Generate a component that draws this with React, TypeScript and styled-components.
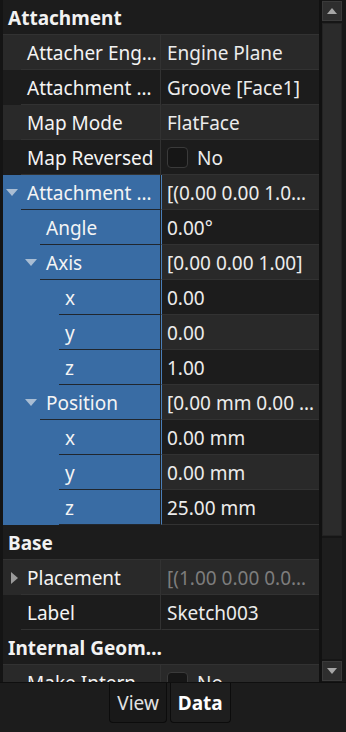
import React from 'react';
import styled, { createGlobalStyle } from 'styled-components';

const Global = createGlobalStyle`
  html, body { margin: 0; padding: 0; background: #1c1c1c; }
  body { font-family: "Noto Sans", "Open Sans", sans-serif; }
  * { box-sizing: border-box; }
`;

type Row =
  | { kind: 'group'; label: string }
  | {
      kind: 'prop';
      label: string;
      value: string;
      level: number;
      arrow?: 'down' | 'right';
      selected?: boolean;
      dim?: boolean;
      check?: boolean;
    };

const rows: Row[] = [
  { kind: 'group', label: 'Attachment' },
  { kind: 'prop', label: 'Attacher Eng…', value: 'Engine Plane', level: 0 },
  { kind: 'prop', label: 'Attachment …', value: 'Groove [Face1]', level: 0 },
  { kind: 'prop', label: 'Map Mode', value: 'FlatFace', level: 0 },
  { kind: 'prop', label: 'Map Reversed', value: 'No', level: 0, check: true },
  { kind: 'prop', label: 'Attachment …', value: '[(0.00 0.00 1.0…', level: 0, arrow: 'down', selected: true },
  { kind: 'prop', label: 'Angle', value: '0.00°', level: 1, selected: true },
  { kind: 'prop', label: 'Axis', value: '[0.00 0.00 1.00]', level: 1, arrow: 'down', selected: true },
  { kind: 'prop', label: 'x', value: '0.00', level: 2, selected: true },
  { kind: 'prop', label: 'y', value: '0.00', level: 2, selected: true },
  { kind: 'prop', label: 'z', value: '1.00', level: 2, selected: true },
  { kind: 'prop', label: 'Position', value: '[0.00 mm 0.00 …', level: 1, arrow: 'down', selected: true },
  { kind: 'prop', label: 'x', value: '0.00 mm', level: 2, selected: true },
  { kind: 'prop', label: 'y', value: '0.00 mm', level: 2, selected: true },
  { kind: 'prop', label: 'z', value: '25.00 mm', level: 2, selected: true },
  { kind: 'group', label: 'Base' },
  { kind: 'prop', label: 'Placement', value: '[(1.00 0.00 0.0…', level: 0, arrow: 'right', dim: true },
  { kind: 'prop', label: 'Label', value: 'Sketch003', level: 0 },
  { kind: 'group', label: 'Internal Geom…' },
  { kind: 'prop', label: 'Make Intern…', value: 'No', level: 0, check: true },
];

const BLUE = '#396ca4';
const LIGHT = '#292929';
const DARK = '#1c1c1c';
const GRID = '#323232';
const FS = '19px';

const Frame = styled.div`
  width: 346px;
  height: 732px;
  display: flex;
  flex-direction: column;
  background: #1c1c1c;
  overflow: hidden;
`;

const Body = styled.div`
  height: 683px;
  flex: none;
  display: flex;
  background: #141414;
  border-bottom: 1px solid #0f0f0f;
`;

const Table = styled.div`
  margin-left: 3px;
  width: 316px;
  overflow: hidden;
  background: ${DARK};
  display: flex;
  flex-direction: column;
`;

const GroupRow = styled.div`
  flex: none;
  height: 35px;
  border-bottom: 1px solid ${GRID};
  background: ${DARK};
  display: flex;
  align-items: center;
  padding: 2px 0 0 5px;
  color: #f2f2f2;
  font-weight: 700;
  font-size: ${FS};
  white-space: nowrap;
`;

const PropRow = styled.div`
  flex: none;
  height: 35px;
  display: grid;
  grid-template-columns: 158px 158px;
`;

const NameCell = styled.div<{ $bg: string; $sel: boolean }>`
  display: flex;
  background: ${(p) => p.$bg};
  border-right: 1px solid ${(p) => (p.$sel ? '#1f1f1f' : GRID)};
`;

const ArrowSlot = styled.div<{ $level: number }>`
  flex: none;
  width: ${(p) => 18 + p.$level * 19}px;
  display: flex;
  align-items: center;
  justify-content: flex-end;
  padding-right: 3px;
`;

const NameBody = styled.div<{ $sel: boolean }>`
  flex: 1;
  min-width: 0;
  display: flex;
  align-items: center;
  padding: 2px 0 0 6px;
  border-bottom: 1px solid ${(p) => (p.$sel ? '#20262e' : GRID)};
  color: #f4f4f4;
  font-size: ${FS};
  white-space: nowrap;
  overflow: hidden;
`;

const ValueCell = styled.div<{ $bg: string; $sel: boolean; $dim: boolean }>`
  display: flex;
  align-items: center;
  gap: 9px;
  background: ${(p) => p.$bg};
  border-left: 1px solid ${(p) => (p.$sel ? '#4a7fb8' : 'transparent')};
  border-bottom: 1px solid ${GRID};
  padding: 2px 0 0 5px;
  color: ${(p) => (p.$dim ? '#7d7d7d' : '#ececec')};
  font-size: ${FS};
  white-space: nowrap;
  overflow: hidden;
`;

const CheckBox = styled.span`
  flex: none;
  width: 21px;
  height: 21px;
  margin-top: -2px;
  border-radius: 4px;
  border: 1px solid #3a3a3a;
  background: #161616;
`;

const Gutter = styled.div`
  width: 3px;
  background: #111111;
`;

const ScrollBar = styled.div`
  width: 20px;
  display: flex;
  flex-direction: column;
  gap: 2px;
  padding: 1px 0 1px 0;
  background: #161616;
`;

const ScrollButton = styled.div`
  flex: none;
  height: 20px;
  background: #2e2e2e;
  border: 1px solid #3a3a3a;
  display: flex;
  align-items: center;
  justify-content: center;
`;

const Handle = styled.div`
  flex: none;
  height: 513px;
  background: #2b2b2b;
  border: 1px solid #232323;
`;

const Track = styled.div`
  flex: 1;
  background: #1d1d1d;
`;

const RightEdge = styled.div`
  flex: 1;
  background: #171717;
`;

const TabBar = styled.div`
  flex: 1;
  display: flex;
  justify-content: center;
  align-items: flex-start;
  gap: 3px;
  padding-right: 6px;
  background: #1c1c1c;
`;

const Tab = styled.div<{ $active: boolean }>`
  height: 40px;
  padding: 0 7px;
  display: flex;
  align-items: center;
  border: 1px solid #0c0c0c;
  border-top: none;
  border-radius: 0 0 4px 4px;
  background: ${(p) => (p.$active ? '#1e1e1e' : '#191919')};
  color: ${(p) => (p.$active ? '#ffffff' : '#e2e2e2')};
  font-weight: ${(p) => (p.$active ? 700 : 400)};
  font-size: ${FS};
`;

const Arrow = ({ dir, sel }: { dir: 'down' | 'right'; sel: boolean }) =>
  dir === 'down' ? (
    <svg width="12" height="7" viewBox="0 0 12 7">
      <path d="M0 0 H12 L6 7 Z" fill={sel ? '#a9bdd3' : '#a0a0a0'} />
    </svg>
  ) : (
    <svg width="7" height="12" viewBox="0 0 7 12">
      <path d="M0 0 V12 L7 6 Z" fill="#9a9a9a" />
    </svg>
  );

const ScrollArrow = ({ up }: { up: boolean }) => (
  <svg width="10" height="6" viewBox="0 0 10 6">
    <path d={up ? 'M0 6 H10 L5 0 Z' : 'M0 0 H10 L5 6 Z'} fill="#a6a6a6" />
  </svg>
);

export default function App() {
  let alt = 0;
  return (
    <>
      <Global />
      <Frame>
        <Body>
          <Table>
            {rows.map((r, i) => {
              if (r.kind === 'group') return <GroupRow key={i}>{r.label}</GroupRow>;
              const bg = alt % 2 === 0 ? LIGHT : DARK;
              alt++;
              const sel = !!r.selected;
              return (
                <PropRow key={i}>
                  <NameCell $bg={sel ? BLUE : bg} $sel={sel}>
                    <ArrowSlot $level={r.level}>
                      {r.arrow && <Arrow dir={r.arrow} sel={sel} />}
                    </ArrowSlot>
                    <NameBody $sel={sel}>{r.label}</NameBody>
                  </NameCell>
                  <ValueCell $bg={bg} $sel={sel} $dim={!!r.dim}>
                    {r.check && <CheckBox />}
                    {r.value}
                  </ValueCell>
                </PropRow>
              );
            })}
          </Table>
          <Gutter />
          <ScrollBar>
            <ScrollButton>
              <ScrollArrow up />
            </ScrollButton>
            <Handle />
            <Track />
            <ScrollButton>
              <ScrollArrow up={false} />
            </ScrollButton>
          </ScrollBar>
          <RightEdge />
        </Body>
        <TabBar>
          <Tab $active={false}>View</Tab>
          <Tab $active>Data</Tab>
        </TabBar>
      </Frame>
    </>
  );
}
